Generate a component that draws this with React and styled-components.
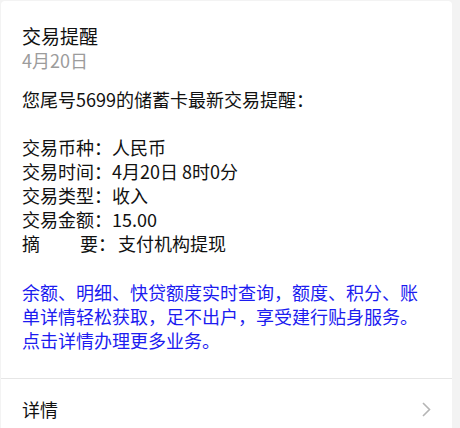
import styled, { createGlobalStyle } from 'styled-components';

const GlobalStyle = createGlobalStyle`
  html, body {
    margin: 0;
    padding: 0;
    background: #f3f3f3;
  }
  body {
    font-family: "Noto Sans CJK SC", "Noto Sans", sans-serif;
    color: #111;
  }
`;

const fields = [
  { label: '交易币种', value: '人民币' },
  { label: '交易时间', value: '4月20日 8时0分' },
  { label: '交易类型', value: '收入' },
  { label: '交易金额', value: '15.00' },
  { label: '摘要', value: '支付机构提现', wide: true },
];

const App = () => {
  return (
    <>
      <GlobalStyle />
      <Card>
        <Content>
          <Title>交易提醒</Title>
          <DateText>4月20日</DateText>
          <Intro>您尾号5699的储蓄卡最新交易提醒：</Intro>
          <FieldList>
            {fields.map((f) => (
              <FieldRow key={f.label}>
                <Label $wide={f.wide}>{f.label}</Label>
                <Colon $wide={f.wide}>：</Colon>
                <span>{f.value}</span>
              </FieldRow>
            ))}
          </FieldList>
          <Promo>
            余额、明细、快贷额度实时查询，额度、积分、账单详情轻松获取，足不出户，享受建行贴身服务。点击详情办理更多业务。
          </Promo>
        </Content>
        <DetailRow>
          <span>详情</span>
          <Chevron width="9" height="15" viewBox="0 0 9 15">
            <path d="M1 1l6.5 6.5L1 14" fill="none" stroke="#b5b5b5" strokeWidth="1.6" />
          </Chevron>
        </DetailRow>
      </Card>
    </>
  );
};

export default App;

const Card = styled.div`
  margin: 1px 0 0 1px;
  width: 451px;
  background: #fff;
  border-radius: 4px;
  overflow: hidden;
`;

const Content = styled.div`
  padding: 23px 21px 26px;
  border-bottom: 1px solid #e6e6e6;
  font-size: 18px;
  line-height: 24px;
`;

const Title = styled.div`
  font-size: 19px;
  line-height: 24px;
  color: #111;
`;

const DateText = styled.div`
  font-size: 18px;
  line-height: 24px;
  color: #9c9c9c;
`;

const Intro = styled.div`
  margin-top: 15px;
`;

const FieldList = styled.div`
  margin-top: 24px;
  display: flex;
  flex-direction: column;
`;

const FieldRow = styled.div`
  display: flex;
  white-space: nowrap;
`;

const Label = styled.span`
  display: inline-block;
  width: ${(p) => (p.$wide ? '76px' : '72px')};
  text-align: justify;
  text-align-last: justify;
`;

const Colon = styled.span`
  display: inline-block;
  width: ${(p) => (p.$wide ? '20px' : '18px')};
`;

const Promo = styled.div`
  margin-top: 25px;
  color: #1c1cf0;
`;

const DetailRow = styled.div`
  display: flex;
  align-items: center;
  justify-content: space-between;
  height: 60px;
  padding: 0 21px;
  font-size: 18px;
  color: #111;
`;

const Chevron = styled.svg`
  display: block;
`;
